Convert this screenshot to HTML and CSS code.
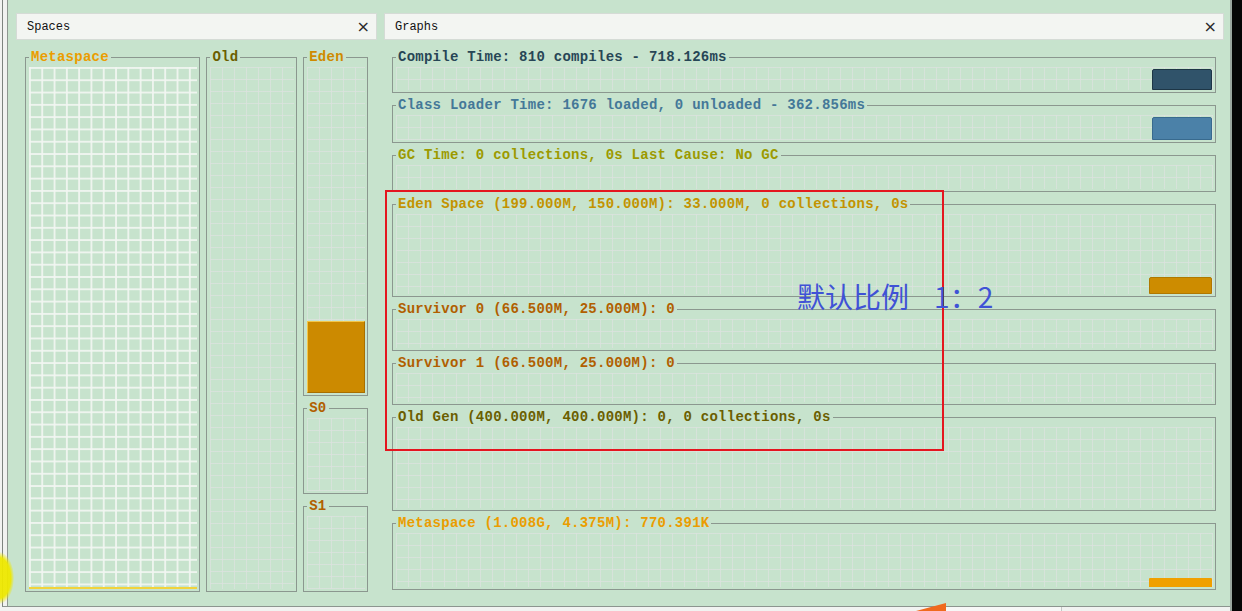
FILE: index.html
```html
<!DOCTYPE html>
<html lang="en">
<head>
    <meta charset="UTF-8">
    <meta name="viewport" content="width=device-width, initial-scale=1.0">
    <title>Visual GC</title>
    <link rel="stylesheet" href="styles.css">
</head>
<body>
    <div class="screen">
        <div class="app">
            <div class="frame">
                <div class="desk">
                    <!-- Spaces panel -->
                    <div class="panel spaces">
                        <div class="panel-head">
                            <span>Spaces</span>
                            <span class="close">&times;</span>
                        </div>
                        <div class="panel-body spaces-body">
                            <div class="box meta-col c-meta">
                                <div class="box-title">Metaspace</div>
                                <div class="plot grid-bright">
                                    <div class="bar bar-line" style="height: 2px; width: 100%"></div>
                                </div>
                            </div>
                            <div class="box old-col c-old">
                                <div class="box-title">Old</div>
                                <div class="plot grid-faint"></div>
                            </div>
                            <div class="young-col">
                                <div class="box eden c-eden">
                                    <div class="box-title">Eden</div>
                                    <div class="plot grid-faint">
                                        <div class="bar bar-eden" style="height: 72px; width: 100%"></div>
                                    </div>
                                </div>
                                <div class="box survivor c-surv">
                                    <div class="box-title">S0</div>
                                    <div class="plot grid-faint"></div>
                                </div>
                                <div class="box survivor c-surv">
                                    <div class="box-title">S1</div>
                                    <div class="plot grid-faint"></div>
                                </div>
                            </div>
                        </div>
                    </div>

                    <!-- Graphs panel -->
                    <div class="panel graphs">
                        <div class="panel-head">
                            <span>Graphs</span>
                            <span class="close">&times;</span>
                        </div>
                        <div class="panel-body graphs-body">
                            <div class="box h-compile c-compile">
                                <div class="box-title">Compile Time: 810 compiles - 718.126ms</div>
                                <div class="plot grid-faint">
                                    <div class="bar bar-compile" style="height: 21px; width: 60px"></div>
                                </div>
                            </div>
                            <div class="box h-loader c-loader">
                                <div class="box-title">Class Loader Time: 1676 loaded, 0 unloaded - 362.856ms</div>
                                <div class="plot grid-faint">
                                    <div class="bar bar-loader" style="height: 23px; width: 60px"></div>
                                </div>
                            </div>
                            <div class="box h-gc c-gc">
                                <div class="box-title">GC Time: 0 collections, 0s Last Cause: No GC</div>
                                <div class="plot grid-faint"></div>
                            </div>
                            <div class="box h-eden c-edengraph">
                                <div class="box-title">Eden Space (199.000M, 150.000M): 33.000M, 0 collections, 0s</div>
                                <div class="plot grid-faint">
                                    <div class="bar bar-edengraph" style="height: 17px; width: 63px"></div>
                                </div>
                            </div>
                            <div class="box h-surv c-surv">
                                <div class="box-title">Survivor 0 (66.500M, 25.000M): 0</div>
                                <div class="plot grid-faint"></div>
                            </div>
                            <div class="box h-surv c-surv">
                                <div class="box-title">Survivor 1 (66.500M, 25.000M): 0</div>
                                <div class="plot grid-faint"></div>
                            </div>
                            <div class="box h-old c-old">
                                <div class="box-title">Old Gen (400.000M, 400.000M): 0, 0 collections, 0s</div>
                                <div class="plot grid-faint"></div>
                            </div>
                            <div class="box h-meta c-meta">
                                <div class="box-title">Metaspace (1.008G, 4.375M): 770.391K</div>
                                <div class="plot grid-faint">
                                    <div class="bar bar-meta" style="height: 9px; width: 63px"></div>
                                </div>
                            </div>
                        </div>
                    </div>
                </div>
            </div>
            <div class="taskbar">
                <div class="task-item"></div>
            </div>
        </div>
        <div class="edge"></div>
    </div>

    <!-- Annotations drawn over the screenshot -->
    <div class="mark-box"></div>
    <div class="mark-text">默认比例&nbsp;&nbsp;&nbsp;&nbsp;1：2</div>
    <div class="cursor-glow"></div>
    <div class="arrow"></div>
</body>
</html>
```

FILE: styles.css
```css
/* General styles */
* {
    margin: 0;
    padding: 0;
    box-sizing: border-box;
}

body {
    width: 1242px;
    height: 611px;
    overflow: hidden;
    position: relative;
    background: #eef1ee;
    font-family: 'Liberation Mono', monospace;
}

.screen {
    display: flex;
    height: 611px;
}

.app {
    flex: 1;
    display: flex;
    flex-direction: column;
    padding-left: 2px;
    border-right: 2px solid #9aa69e;
    background: #f1f3f1;
}

.edge {
    width: 10px;
    background: #050505;
}

.frame {
    height: 607px;
    border-left: 1px solid #7d847f;
    border-bottom: 1px solid #8c958f;
    padding-left: 4px;
    background: #f0f2f0;
}

.desk {
    height: 100%;
    display: flex;
    gap: 7px;
    padding: 13px 6px 0 8px;
    border-left: 1px solid #8e9791;
    background: #c7e3cd;
}

.taskbar {
    flex: 1;
    position: relative;
}

.task-item {
    position: absolute;
    left: 943px;
    top: 0;
    width: 117px;
    height: 6px;
    border: 1px solid #c4c8c5;
    border-top: none;
    background: #f7f8f7;
}

/* Panels */
.panel {
    display: flex;
    flex-direction: column;
}

.spaces {
    width: 361px;
}

.graphs {
    flex: 1;
}

.panel-head {
    height: 27px;
    display: flex;
    align-items: center;
    justify-content: space-between;
    padding: 0 6px 0 10px;
    background: #f3f5f2;
    border: 1px solid #d5dbd6;
    font-size: 12px;
    color: #111;
}

.close {
    font-family: 'DejaVu Sans', sans-serif;
    font-size: 16px;
    color: #2a2a2a;
    line-height: 1;
}

.panel-body {
    flex: 1;
    display: flex;
    padding: 17px 0 14px;
}

.spaces-body {
    padding-left: 9px;
    padding-right: 9px;
    gap: 6px;
}

.graphs-body {
    flex-direction: column;
    gap: 12px;
    padding-left: 8px;
    padding-right: 8px;
    padding-bottom: 16px;
}

/* Titled boxes */
.box {
    display: flex;
    flex-direction: column;
    min-width: 0;
    border: 1px solid #8b978f;
    padding: 0 2px 2px 3px;
}

.box-title {
    align-self: flex-start;
    margin-top: -7px;
    padding: 0 2px;
    background: #c7e3cd;
    font-size: 14px;
    line-height: 12px;
    font-weight: bold;
    letter-spacing: 0.25px;
    white-space: nowrap;
}

.plot {
    flex: 1;
    margin-top: 4px;
    display: flex;
    justify-content: flex-end;
    align-items: flex-end;
}

.grid-faint {
    background-image:
        linear-gradient(to right, rgba(222, 226, 224, 0.7) 1px, transparent 1px),
        linear-gradient(to bottom, rgba(222, 226, 224, 0.7) 1px, transparent 1px);
    background-size: 12px 12px;
}

.grid-bright {
    background-image:
        linear-gradient(to right, rgba(242, 246, 242, 0.9) 2px, transparent 2px),
        linear-gradient(to bottom, rgba(242, 246, 242, 0.9) 2px, transparent 2px);
    background-size: 12.3px 12.3px;
}

/* Spaces columns */
.meta-col {
    width: 176px;
}

.old-col {
    width: 91px;
}

.young-col {
    width: 65px;
    display: flex;
    flex-direction: column;
    gap: 12px;
}

.eden {
    flex: 1;
}

.survivor {
    height: 86px;
}

/* Graph heights */
.h-compile { height: 36px; }
.h-loader { height: 38px; }
.h-gc { height: 37px; }
.h-eden { height: 93px; }
.h-surv { height: 42px; }
.h-old { height: 94px; }
.h-meta { height: 67px; }

.graphs .plot {
    padding-right: 1px;
}

/* Title colours */
.c-meta .box-title { color: #eb9d00; }
.c-old .box-title { color: #6b5e00; }
.c-eden .box-title { color: #cf8a00; }
.c-surv .box-title { color: #b15f00; }
.c-compile .box-title { color: #274656; }
.c-loader .box-title { color: #447898; }
.c-gc .box-title { color: #9c9a00; }
.c-edengraph .box-title { color: #c39300; }

/* Bars */
.bar-line {
    background: #f1d33c;
}

.bar-eden {
    background: #cc8a00;
    border: 1px solid #a86f00;
    border-top-color: #f2c64a;
    border-left-color: #f2c64a;
}

.bar-compile {
    background: #30536a;
    border: 1px solid #1d3646;
    border-radius: 2px 2px 0 0;
}

.bar-loader {
    background: #4b81a8;
    border: 1px solid #386a8e;
    border-radius: 2px 2px 0 0;
}

.bar-edengraph {
    background: #cd8c00;
    border: 1px solid #b07800;
    border-radius: 2px 2px 0 0;
}

.bar-meta {
    background: #f0a000;
    border-radius: 1px 1px 0 0;
}

/* Annotation overlays */
.mark-box {
    position: absolute;
    left: 385px;
    top: 190px;
    width: 559px;
    height: 261px;
    border: 2px solid #e4161f;
}

.mark-text {
    position: absolute;
    left: 797px;
    top: 280px;
    font-family: 'Noto Sans CJK SC', sans-serif;
    font-size: 28px;
    line-height: 32px;
    color: #3f52d6;
    white-space: nowrap;
}

.cursor-glow {
    position: absolute;
    left: -16px;
    top: 552px;
    width: 30px;
    height: 52px;
    border-radius: 50%;
    background: radial-gradient(ellipse, rgba(238, 232, 0, 0.95) 55%, rgba(238, 232, 0, 0) 72%);
}

.arrow {
    position: absolute;
    left: 916px;
    top: 603px;
    width: 30px;
    height: 8px;
    background: #f06a1e;
    clip-path: polygon(0 100%, 100% 0, 100% 100%);
}
```
